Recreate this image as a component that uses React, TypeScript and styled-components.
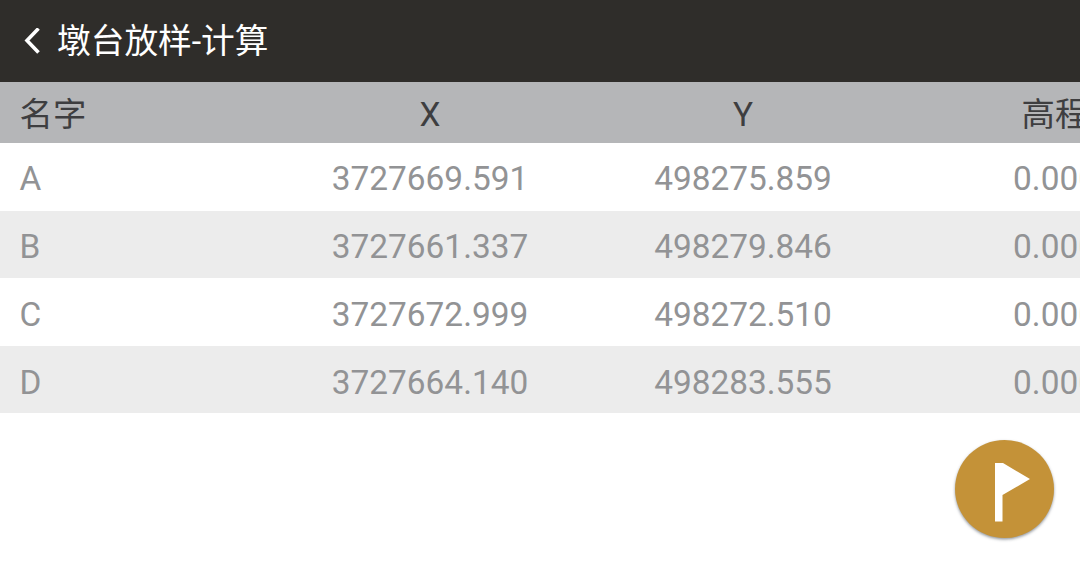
import React from "react";
import styled, { createGlobalStyle } from "styled-components";

const GlobalStyle = createGlobalStyle`
  html, body { margin: 0; padding: 0; width: 1080px; height: 566px; overflow: hidden; background: #fff; }
  body { font-family: Roboto, "Noto Sans CJK SC", sans-serif; }
  #root { width: 1080px; height: 566px; }
`;

const Page = styled.div`
  position: relative;
  width: 1080px;
  height: 566px;
  overflow: hidden;
  background: #fff;
`;

const TitleBar = styled.header`
  height: 82px;
  background: #2f2d2a;
  display: flex;
  align-items: center;
  padding-left: 24px;
  gap: 17px;
  color: #fff;
`;

const BackIcon = styled.svg`
  width: 16px;
  height: 26px;
  display: block;
`;

const Title = styled.h1`
  margin: 2px 0 0;
  font-size: 33.7px;
  font-weight: 400;
  line-height: 1;
  white-space: nowrap;
`;

const Table = styled.section`
  width: 1080px;
  overflow: hidden;
`;

const Row = styled.div<{ $bg: string; $h: number; $top: number }>`
  box-sizing: border-box;
  display: grid;
  grid-template-columns: 273.5px 313px 313px 311px;
  width: 1210.5px;
  height: ${(p) => p.$h}px;
  padding-top: ${(p) => p.$top}px;
  align-items: start;
  background: ${(p) => p.$bg};
`;

const NameCell = styled.div<{ $head?: boolean }>`
  padding-left: 19.5px;
  font-size: 33.4px;
  line-height: 1;
  white-space: nowrap;
  color: ${(p) => (p.$head ? "#3e3e40" : "#929395")};
`;

const ValueCell = styled(NameCell)`
  padding-left: 0;
  text-align: center;
`;

const Fab = styled.button`
  position: absolute;
  left: 955px;
  top: 440px;
  width: 99px;
  height: 98px;
  padding: 0;
  border: 0;
  border-radius: 50%;
  background: #c49238;
  box-shadow: 0 1.5px 3px rgba(60, 70, 80, 0.55);
`;

const FlagIcon = styled.svg`
  display: block;
  width: 98px;
  height: 98px;
`;

const rows = [
  { name: "A", x: "3727669.591", y: "498275.859", z: "0.000", h: 68, top: 19 },
  { name: "B", x: "3727661.337", y: "498279.846", z: "0.000", h: 67, top: 19 },
  { name: "C", x: "3727672.999", y: "498272.510", z: "0.000", h: 68, top: 20 },
  { name: "D", x: "3727664.140", y: "498283.555", z: "0.000", h: 67, top: 20 },
];

export default function App() {
  return (
    <Page>
      <GlobalStyle />
      <TitleBar>
        <BackIcon viewBox="0 0 16 26" fill="none">
          <path d="M14.5 0.5 L3 12.5 L14.5 24.5" stroke="#fff" strokeWidth="3.6" />
        </BackIcon>
        <Title>墩台放样-计算</Title>
      </TitleBar>
      <Table>
        <Row $bg="#b5b6b8" $h={61} $top={16}>
          <NameCell $head>名字</NameCell>
          <ValueCell $head>X</ValueCell>
          <ValueCell $head>Y</ValueCell>
          <ValueCell $head>高程</ValueCell>
        </Row>
        {rows.map((r, i) => (
          <Row key={r.name} $bg={i % 2 ? "#ececec" : "#ffffff"} $h={r.h} $top={r.top}>
            <NameCell>{r.name}</NameCell>
            <ValueCell>{r.x}</ValueCell>
            <ValueCell>{r.y}</ValueCell>
            <ValueCell>{r.z}</ValueCell>
          </Row>
        ))}
      </Table>
      <Fab aria-label="flag">
        <FlagIcon viewBox="0 0 98 98">
          <path d="M40 23 H48 L75 39 L47.5 55 V81.5 H40 Z" fill="#fff" />
        </FlagIcon>
      </Fab>
    </Page>
  );
}
